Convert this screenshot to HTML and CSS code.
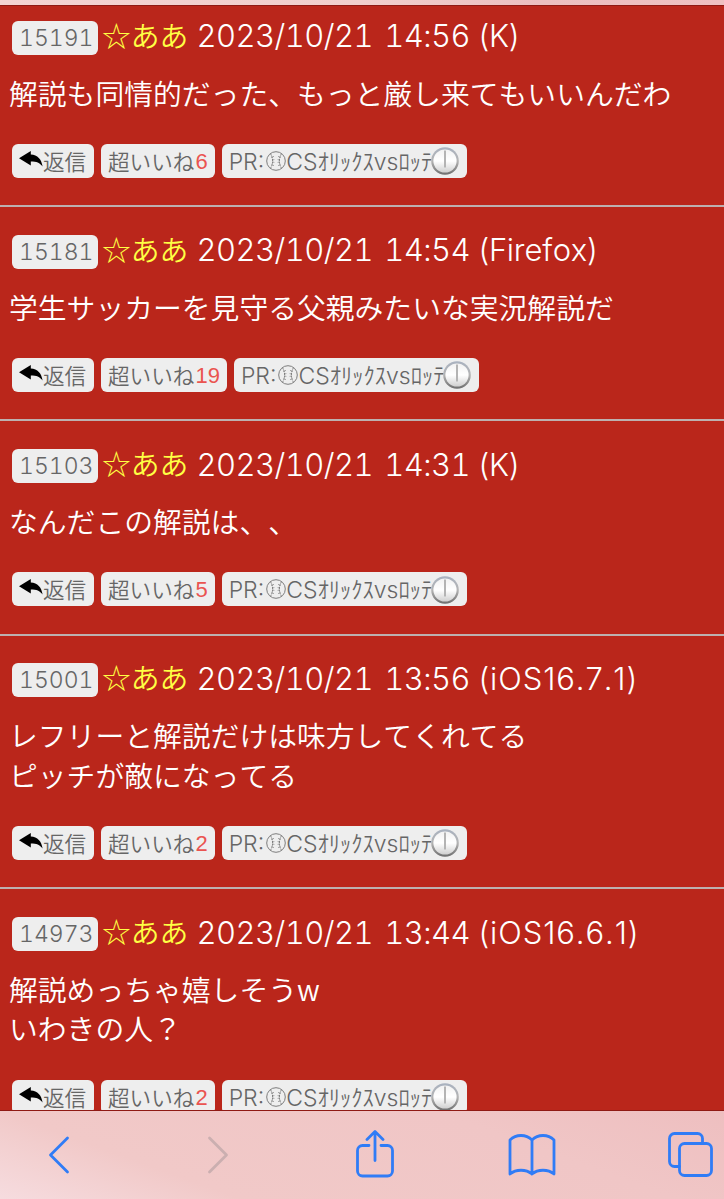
FILE: index.html
```html
<!DOCTYPE html>
<html lang="ja">
<head>
    <meta charset="UTF-8">
    <meta name="viewport" content="width=device-width, initial-scale=1.0">
    <title>掲示板</title>
    <link rel="stylesheet" href="styles.css">
</head>
<body>
<svg width="0" height="0" class="defs">
    <defs>
        <linearGradient id="rim" x1="0" y1="0" x2="0" y2="1">
            <stop offset="0" stop-color="#a9b2c0"/>
            <stop offset="0.5" stop-color="#b4b4b4"/>
            <stop offset="1" stop-color="#6d6d6d"/>
        </linearGradient>
        <linearGradient id="face" x1="0" y1="0" x2="0" y2="1">
            <stop offset="0" stop-color="#f2f2f2"/>
            <stop offset="0.5" stop-color="#ffffff"/>
            <stop offset="1" stop-color="#cfcfcf"/>
        </linearGradient>
        <symbol id="reply" viewBox="0 0 24 16">
            <path d="M0 7.200 11.800 0v3.600c6.800.4 10.700 4.600 11.800 12-2.800-3.700-6-5-11.800-5v3.800z"/>
        </symbol>
        <symbol id="ball" viewBox="0 0 20 20">
            <g fill="none" stroke="#707070" stroke-width=".9">
                <circle cx="10" cy="10" r="9.300"/>
                <path d="M4.500 2.700q4.200 7.300 0 14.600M15.500 2.700q-4.200 7.300 0 14.600" stroke-dasharray="2 .8"/>
                <path d="M5.500 6.500l2.500-1.200M6 9l2.400-.4M6 11l2.400.4M5.500 13.500l2.500 1.200M14.500 6.500l-2.500-1.200M14 9l-2.400-.4M14 11l-2.400.4M14.500 13.500l-2.500 1.200" stroke-width=".6"/>
            </g>
        </symbol>
        <symbol id="clock" viewBox="0 0 28 28">
            <circle cx="14" cy="14" r="13.800" fill="url(#rim)"/>
            <circle cx="14" cy="14" r="11.600" fill="url(#face)"/>
            <path d="M14 3.500v17" stroke="#b4b4b4" stroke-width="2"/>
        </symbol>
    </defs>
</svg>

<div class="topbar"></div>

<div class="posts">
    <div class="post">
        <div class="head"><span class="no">15191</span><span class="name">☆ああ</span><span class="date">2023/10/21 14:56</span><span class="ua">(K)</span></div>
        <p class="text">解説も同情的だった、もっと厳し来てもいいんだわ</p>
        <div class="buttons">
            <a class="btn"><svg class="reply"><use href="#reply"/></svg>返信</a>
            <a class="btn">超いいね<span class="count">6</span></a>
            <a class="btn pr"><span class="pr-label">PR:</span><svg class="ball"><use href="#ball"/></svg><span class="cs">CS</span><span class="kana">ｵﾘｯｸｽ</span><span class="vs">vs</span><span class="kana">ﾛｯﾃ</span><svg class="clock"><use href="#clock"/></svg></a>
        </div>
    </div>

    <div class="post">
        <div class="head"><span class="no">15181</span><span class="name">☆ああ</span><span class="date">2023/10/21 14:54</span><span class="ua">(Firefox)</span></div>
        <p class="text">学生サッカーを見守る父親みたいな実況解説だ</p>
        <div class="buttons">
            <a class="btn"><svg class="reply"><use href="#reply"/></svg>返信</a>
            <a class="btn">超いいね<span class="count">19</span></a>
            <a class="btn pr"><span class="pr-label">PR:</span><svg class="ball"><use href="#ball"/></svg><span class="cs">CS</span><span class="kana">ｵﾘｯｸｽ</span><span class="vs">vs</span><span class="kana">ﾛｯﾃ</span><svg class="clock"><use href="#clock"/></svg></a>
        </div>
    </div>

    <div class="post">
        <div class="head"><span class="no">15103</span><span class="name">☆ああ</span><span class="date">2023/10/21 14:31</span><span class="ua">(K)</span></div>
        <p class="text">なんだこの解説は、、</p>
        <div class="buttons">
            <a class="btn"><svg class="reply"><use href="#reply"/></svg>返信</a>
            <a class="btn">超いいね<span class="count">5</span></a>
            <a class="btn pr"><span class="pr-label">PR:</span><svg class="ball"><use href="#ball"/></svg><span class="cs">CS</span><span class="kana">ｵﾘｯｸｽ</span><span class="vs">vs</span><span class="kana">ﾛｯﾃ</span><svg class="clock"><use href="#clock"/></svg></a>
        </div>
    </div>

    <div class="post">
        <div class="head"><span class="no">15001</span><span class="name">☆ああ</span><span class="date">2023/10/21 13:56</span><span class="ua ios">(iOS16.7.1)</span></div>
        <p class="text">レフリーと解説だけは味方してくれてる<br>ピッチが敵になってる</p>
        <div class="buttons">
            <a class="btn"><svg class="reply"><use href="#reply"/></svg>返信</a>
            <a class="btn">超いいね<span class="count">2</span></a>
            <a class="btn pr"><span class="pr-label">PR:</span><svg class="ball"><use href="#ball"/></svg><span class="cs">CS</span><span class="kana">ｵﾘｯｸｽ</span><span class="vs">vs</span><span class="kana">ﾛｯﾃ</span><svg class="clock"><use href="#clock"/></svg></a>
        </div>
    </div>

    <div class="post">
        <div class="head"><span class="no">14973</span><span class="name">☆ああ</span><span class="date">2023/10/21 13:44</span><span class="ua ios">(iOS16.6.1)</span></div>
        <p class="text">解説めっちゃ嬉しそうw<br>いわきの人？</p>
        <div class="buttons">
            <a class="btn"><svg class="reply"><use href="#reply"/></svg>返信</a>
            <a class="btn">超いいね<span class="count">2</span></a>
            <a class="btn pr"><span class="pr-label">PR:</span><svg class="ball"><use href="#ball"/></svg><span class="cs">CS</span><span class="kana">ｵﾘｯｸｽ</span><span class="vs">vs</span><span class="kana">ﾛｯﾃ</span><svg class="clock"><use href="#clock"/></svg></a>
        </div>
    </div>
</div>

<div class="toolbar">
    <svg width="24" height="40" viewBox="0 0 24 40"><path d="M21.500 3 4.500 20l17 17"/></svg>
    <svg class="off" width="24" height="40" viewBox="0 0 24 40"><path d="M2.500 3l17 17-17 17"/></svg>
    <svg width="40" height="50" viewBox="0 0 40 50"><path d="M14 15.500H7.500a5 5 0 0 0-5 5V41a5 5 0 0 0 5 5h25a5 5 0 0 0 5-5V20.500a5 5 0 0 0-5-5H26M20 30.500V2M12 9.500l8-8 8 8"/></svg>
    <svg width="50" height="44" viewBox="0 0 50 44"><path d="M25 7v34C19 36 9 36 3 41V7C9 1 19 1 25 7C31 1 41 1 47 7v34C41 36 31 36 25 41"/></svg>
    <svg width="46" height="46" viewBox="0 0 46 46"><path d="M11.500 34.500H6.500a5 5 0 0 1-5-5V6.500a5 5 0 0 1 5-5h23a5 5 0 0 1 5 5v5"/><rect x="11.500" y="11.500" width="32" height="32" rx="5"/></svg>
</div>
</body>
</html>
```
FILE: styles.css
```css
* {
    box-sizing: border-box;
    margin: 0;
    padding: 0;
}
body {
    display: flex;
    flex-direction: column;
    height: 1199px;
    overflow: hidden;
    background: #ba261b;
    color: #fff;
    font-family: "Noto Sans CJK JP", sans-serif;
    font-weight: 350;
    font-kerning: none;
    text-spacing-trim: space-all;
}
.defs {
    position: absolute;
}
.topbar {
    flex: none;
    height: 6px;
    background: linear-gradient(90deg, #f3d3d2, #f1cfcd 50%, #ecbfc0 75%, #efc1c2);
    border-bottom: 1px solid #8f1a14;
}
.posts {
    flex: 1;
    min-height: 0;
    overflow: hidden;
}
.post {
    padding: 27.7px 9px 27.4px;
    border-bottom: 2px solid #bdb0b0;
}
.post:first-child {
    padding-top: 14.5px;
}
.head {
    display: flex;
    align-items: center;
    height: 34px;
    padding-left: 3px;
    font-size: 28.8px;
    white-space: nowrap;
}
.no, .btn {
    display: flex;
    align-items: center;
    height: 34px;
    border-radius: 6px;
    background: #eee;
    color: #666;
    font-size: 21.6px;
    line-height: 32px;
}
.no {
    width: 86px;
    padding-left: 7px;
}
.no, .date, .ua, .pr-label, .cs, .vs {
    font-family: Inter, "Noto Sans CJK JP", sans-serif;
    font-weight: 300;
}
.no, .date {
    font-variant-numeric: tabular-nums;
}
.no {
    font-size: 23px;
    line-height: 36px;
}
.name {
    height: 40px;
    margin-left: 4px;
    color: #ffff44;
    line-height: 34px;
}
.date, .ua {
    height: 37px;
    font-size: 31px;
    line-height: 34px;
}
.date {
    width: 282px;
    margin-left: 8px;
    letter-spacing: -0.55px;
    word-spacing: 3.5px;
}
.ua {
    letter-spacing: -0.3px;
}
.ios {
    letter-spacing: 0.9px;
}
.text {
    margin-top: 18px;
    font-size: 28.8px;
    line-height: 39.4px;
}
.buttons {
    display: flex;
    gap: 7px;
    margin-top: 31.8px;
    padding-left: 3px;
}
.btn {
    padding: 0 7px;
    white-space: nowrap;
}
.btn:first-child {
    width: 82px;
}
.reply {
    width: 24px;
    height: 16px;
    margin-top: -4px;
    fill: #000;
}
.count {
    padding: 2px 0 0 1px;
    color: #ea5450;
    font-family: "Liberation Sans", sans-serif;
    font-weight: 400;
    font-size: 22px;
}
.pr-label, .cs, .vs {
    padding-top: 2px;
    font-size: 23px;
}
.pr-label {
    margin-right: 2px;
}
.kana {
    height: 34px;
    font-size: 22.5px;
}
.ball {
    width: 20px;
    height: 20px;
}
.clock {
    width: 28px;
    height: 28px;
    margin: 1px 1px 0 -1px;
}
.toolbar {
    flex: none;
    display: grid;
    grid-template-columns: 115px 208px 104px 210px 87px;
    align-items: center;
    justify-items: center;
    height: 89px;
    border-top: 1px solid #8f1a14;
    background: linear-gradient(20deg, #f6dcdf, #f1c9c8 25%, #f0c6c6 70%, #eebfc0);
}
.toolbar svg {
    fill: none;
    stroke: #307cf6;
    stroke-width: 2.8;
    stroke-linecap: round;
    stroke-linejoin: round;
}
.toolbar .off {
    stroke: #cbafb0;
}
.toolbar svg:last-child {
    margin-left: 20px;
}
```
